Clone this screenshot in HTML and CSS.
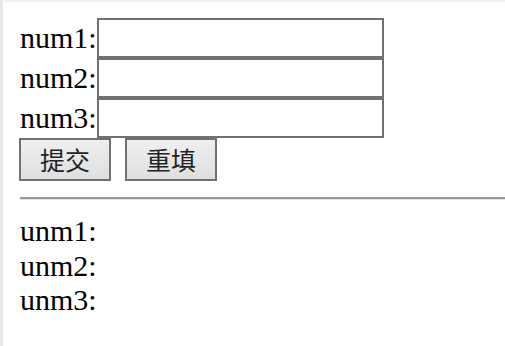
FILE: index.html
```html
<!DOCTYPE html>
<html>
<head>
<meta charset="utf-8">
<link rel="stylesheet" href="styles.css">
</head>
<body>
<div class="page">
  <form class="form">
    <div class="row"><span class="label">num1:</span><input class="field" type="text"></div>
    <div class="row"><span class="label">num2:</span><input class="field" type="text"></div>
    <div class="row"><span class="label">num3:</span><input class="field" type="text"></div>
    <div class="actions">
      <button class="btn" type="button">提交</button>
      <button class="btn" type="button">重填</button>
    </div>
  </form>
  <hr class="divider">
  <div class="results">
    <div class="line">unm1:</div>
    <div class="line">unm2:</div>
    <div class="line">unm3:</div>
  </div>
</div>
</body>
</html>
```
FILE: styles.css
```css
html, body {
  margin: 0;
  padding: 0;
  background: #fff;
}
.page {
  box-sizing: border-box;
  height: 100vh;
  border-left: 3px solid #e8e8e8;
  border-top: 2px solid #f0f0f0;
  padding: 16px 0 0 17px;
  font-family: "Liberation Serif", "Times New Roman", serif;
  font-size: 30px;
  color: #000;
}
.form {
  margin: 0;
}
.row {
  display: flex;
  align-items: center;
  height: 40px;
}
.label {
  line-height: 34.5px;
}
.field {
  box-sizing: border-box;
  width: 287px;
  height: 40px;
  margin: 0;
  padding: 0;
  border: 2px solid #707070;
  background: #fff;
  outline: none;
}
.actions {
  display: flex;
  gap: 14px;
  margin-left: -1px;
}
.btn {
  box-sizing: border-box;
  width: 92px;
  height: 43px;
  margin: 0;
  padding: 0;
  border: 2px solid #717171;
  background: linear-gradient(#efefef, #dfdfdf);
  font-family: "Noto Sans CJK SC", "Noto Sans", sans-serif;
  font-size: 25px;
  color: #222;
  line-height: 1;
}
.divider {
  margin: 16px 0 0 0;
  height: 0;
  border: 0;
  border-top: 2px solid #9a9a9a;
  border-bottom: 1px solid #e2e2e2;
}
.results {
  padding-top: 14px;
}
.line {
  line-height: 34.5px;
}
```
